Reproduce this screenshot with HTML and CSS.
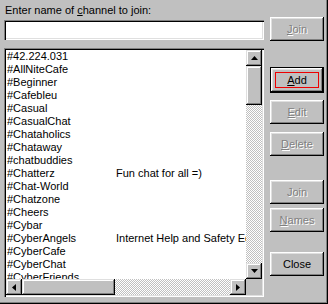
FILE: index.html
```html
<!DOCTYPE html>
<html lang="en">
<head>
  <meta charset="UTF-8">
  <title>Join Channel</title>
  <link rel="stylesheet" href="styles.css">
</head>
<body>
  <div class="dlg">
    <div class="main">
      <label class="lbl">Enter name of <u>c</u>hannel to join:</label>
      <div class="field"></div>
      <div class="list">
        <div class="rows">
          <div class="row"><span class="nm">#42.224.031</span></div>
          <div class="row"><span class="nm">#AllNiteCafe</span></div>
          <div class="row"><span class="nm">#Beginner</span></div>
          <div class="row"><span class="nm">#Cafebleu</span></div>
          <div class="row"><span class="nm">#Casual</span></div>
          <div class="row"><span class="nm">#CasualChat</span></div>
          <div class="row"><span class="nm">#Chataholics</span></div>
          <div class="row"><span class="nm">#Chataway</span></div>
          <div class="row"><span class="nm">#chatbuddies</span></div>
          <div class="row"><span class="nm">#Chatterz</span><span>Fun chat for all =)</span></div>
          <div class="row"><span class="nm">#Chat-World</span></div>
          <div class="row"><span class="nm">#Chatzone</span></div>
          <div class="row"><span class="nm">#Cheers</span></div>
          <div class="row"><span class="nm">#Cybar</span></div>
          <div class="row"><span class="nm">#CyberAngels</span><span>Internet Help and Safety Education</span></div>
          <div class="row"><span class="nm">#CyberCafe</span></div>
          <div class="row"><span class="nm">#CyberChat</span></div>
          <div class="row"><span class="nm">#CyberFriends</span></div>
        </div>
        <div class="vscroll">
          <div class="sbtn"><svg width="7" height="4" viewBox="0 0 7 4"><polygon points="3.5,0 7,4 0,4" fill="#000"/></svg></div>
          <div class="thumb vthumb"></div>
          <div class="track"></div>
          <div class="sbtn"><svg width="7" height="4" viewBox="0 0 7 4"><polygon points="0,0 7,0 3.5,4" fill="#000"/></svg></div>
        </div>
        <div class="hscroll">
          <div class="sbtn"><svg width="4" height="7" viewBox="0 0 4 7"><polygon points="0,3.5 4,0 4,7" fill="#000"/></svg></div>
          <div class="thumb hthumb"></div>
          <div class="track"></div>
          <div class="sbtn"><svg width="4" height="7" viewBox="0 0 4 7"><polygon points="0,0 4,3.5 0,7" fill="#000"/></svg></div>
        </div>
        <div class="corner"></div>
      </div>
    </div>
    <div class="side">
      <button class="btn off b-join"><u>J</u>oin</button>
      <button class="btn def b-add"><u>A</u>dd</button>
      <button class="btn off b-edit"><u>E</u>dit</button>
      <button class="btn off b-del"><u>D</u>elete</button>
      <button class="btn off b-join2">Join</button>
      <button class="btn off b-names"><u>N</u>ames</button>
      <button class="btn b-close">Close</button>
    </div>
  </div>
</body>
</html>
```

FILE: styles.css
```css
/* Diálogo estilo Windows 98 */
body { margin:0; background:#c0c0c0; font-family:"Liberation Sans", Arial, sans-serif; font-size:11px; color:#000; }
.dlg { width:328px; height:304px; box-sizing:border-box; display:flex; padding-left:4px; box-shadow: inset -1px -1px #000, inset -2px -2px #808080; }
.main { width:260px; display:flex; flex-direction:column; }
.lbl { display:block; margin-top:3px; height:14px; line-height:14px; padding-left:1px; }
u { text-decoration-thickness:1px; text-underline-offset:1px; }
/* Campos hundidos */
.field, .list { background:#fff; box-shadow: inset 1px 1px #808080, inset 2px 2px #000, inset -1px -1px #fff, inset -2px -2px #dfdfdf; }
.field { margin-top:3px; height:20px; }
.list { margin-top:8px; height:249px; box-sizing:border-box; padding:2px; display:grid; grid-template-columns:1fr 16px; grid-template-rows:1fr 16px; }
.rows { overflow:hidden; }
.row { height:13px; line-height:13px; display:flex; white-space:nowrap; padding-left:1px; }
.nm { width:109px; flex:none; }
/* Barras de desplazamiento */
.vscroll { display:flex; flex-direction:column; }
.hscroll { display:flex; }
.sbtn, .thumb, .corner { background:#c0c0c0; }
.sbtn, .thumb { box-shadow: inset -1px -1px #000, inset 1px 1px #dfdfdf, inset -2px -2px #808080, inset 2px 2px #fff; }
.sbtn { width:16px; height:16px; flex:none; display:flex; align-items:center; justify-content:center; }
.vthumb { height:39px; flex:none; }
.hthumb { width:93px; flex:none; }
.track { flex:1; background:repeating-conic-gradient(#c0c0c0 0 25%, #fff 0 50%) 0 0/2px 2px; }
/* Botones */
.side { margin-left:6px; width:54px; display:flex; flex-direction:column; }
.btn { height:24px; padding:0; border:none; background:#c0c0c0; font:inherit; color:#000; position:relative; box-shadow: inset -1px -1px #000, inset 1px 1px #fff, inset -2px -2px #808080, inset 2px 2px #dfdfdf; }
.btn.off { color:#808080; text-shadow:1px 1px #fff; }
.btn.def { height:26px; border:1px solid #000; }
.btn.def::after { content:""; position:absolute; inset:4px; border:1px solid #e00; }
.b-join { margin-top:17px; }
.b-add { margin-top:26px; }
.b-edit { margin-top:7px; }
.b-del { margin-top:8px; }
.b-join2 { margin-top:24px; }
.b-names { margin-top:4px; }
.b-close { margin-top:20px; }
```
